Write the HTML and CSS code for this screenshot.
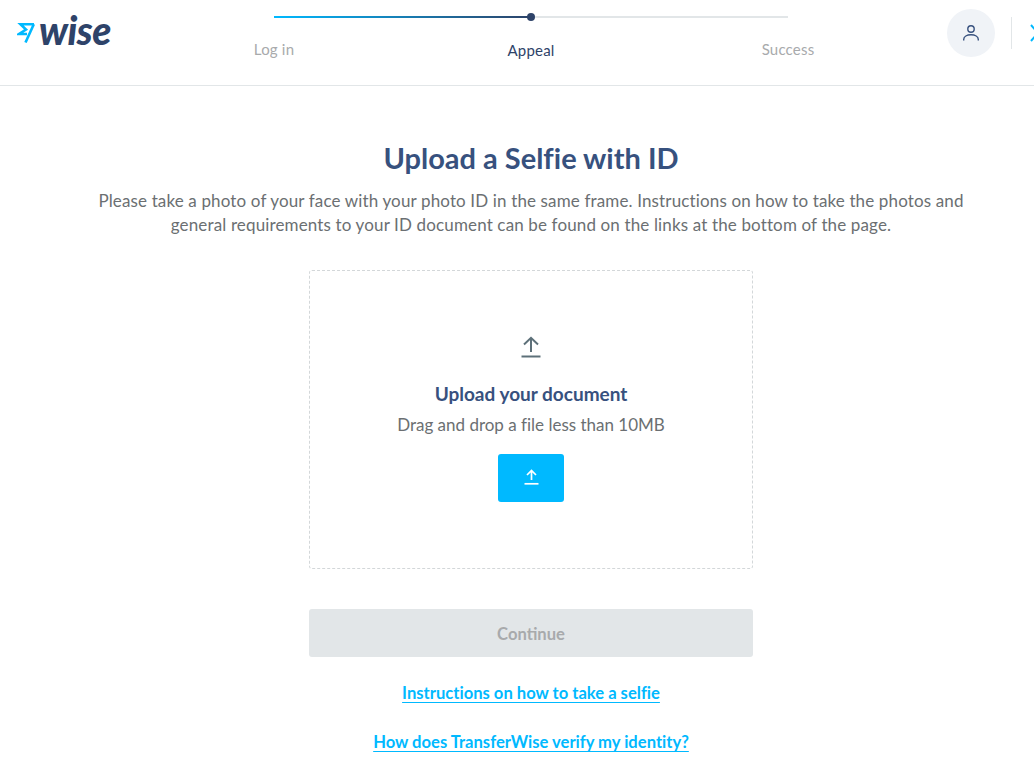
FILE: index.html
```html
<!DOCTYPE html>
<html lang="en">
<head>
  <meta charset="UTF-8">
  <meta name="viewport" content="width=device-width, initial-scale=1">
  <title>Upload a Selfie with ID</title>
  <link rel="stylesheet" href="styles.css">
</head>
<body>
  <div class="page">
    <!-- Top bar -->
    <header class="topbar">
      <a class="logo" href="#">
        <svg class="logo-flag" width="19" height="22" viewBox="0 0 19 22" fill="none" stroke="#00b9ff" stroke-width="2.6">
          <path d="M17 3.2H3.5L9 8.5L2 13H10"/>
          <path d="M16.8 3.2L8.5 21.5"/>
        </svg>
        <span class="logo-word">wise</span>
      </a>

      <div class="stepper">
        <div class="track">
          <div class="track-done"></div>
          <div class="track-dot"></div>
        </div>
        <ul class="steps">
          <li>Log in</li>
          <li class="active">Appeal</li>
          <li>Success</li>
        </ul>
      </div>

      <div class="account">
        <button class="avatar" type="button">
          <svg width="18" height="18" viewBox="0 0 18 18" fill="none" stroke="#37517e" stroke-width="1.4">
            <circle cx="9" cy="5" r="3.2"/>
            <path d="M1.7 16.5V15.6C1.7 12.6 5 10.8 9 10.8S16.3 12.6 16.3 15.6V16.5"/>
          </svg>
        </button>
        <span class="divider"></span>
        <svg class="close" width="14" height="18" viewBox="0 0 14 18" fill="none" stroke="#00b9ff" stroke-width="2">
          <path d="M1 1L8 9L1 17"/>
        </svg>
      </div>
    </header>

    <!-- Main content -->
    <main class="content">
      <h1>Upload a Selfie with ID</h1>
      <p class="intro">Please take a photo of your face with your photo ID in the same frame. Instructions on how to take the photos and general requirements to your ID document can be found on the links at the bottom of the page.</p>

      <div class="dropzone">
        <svg class="upload-icon" width="20" height="22" viewBox="0 0 20 22" fill="none" stroke="#5d7079" stroke-width="2">
          <path d="M10 16V2M3 8.5L10 1.8L17 8.5"/>
          <path d="M0.5 20.5H19.5"/>
        </svg>
        <h2>Upload your document</h2>
        <p class="hint">Drag and drop a file less than 10MB</p>
        <button class="upload-btn" type="button">
          <svg width="15" height="16" viewBox="0 0 15 16" fill="none" stroke="#fff" stroke-width="1.7">
            <path d="M7.5 11V1.5M3 6L7.5 1.5L12 6"/>
            <path d="M0.5 14.8H14.5"/>
          </svg>
        </button>
      </div>

      <button class="continue" type="button" disabled>Continue</button>
      <a class="help-link first" href="#">Instructions on how to take a selfie</a>
      <a class="help-link" href="#">How does TransferWise verify my identity?</a>
    </main>
  </div>
</body>
</html>
```

FILE: styles.css
```css
* {
  margin: 0;
  padding: 0;
  box-sizing: border-box;
}
html, body {
  height: 100%;
  overflow: hidden;
}
body {
  font-family: Lato, 'Noto Sans', sans-serif;
  font-variant-ligatures: none;
  background: #fff;
  color: #5d7079;
}

/* The page is a little wider than the window, the right edge is cut off */
.page {
  width: 1062px;
}

/* Top bar */
.topbar {
  display: flex;
  height: 86px;
  border-bottom: 1px solid #e2e6e8;
}
.logo {
  display: flex;
  align-items: flex-start;
  width: 214px;
  padding: 19px 0 0 17px;
  text-decoration: none;
}
.logo-flag {
  margin-top: 2px;
}
.logo-word {
  margin: -12px 0 0 3px;
  font-size: 39px;
  line-height: 46px;
  font-weight: 900;
  font-style: italic;
  letter-spacing: -0.5px;
  color: #2e4369;
}

/* Steps */
.stepper {
  width: 634px;
  padding-top: 16px;
}
.track {
  position: relative;
  height: 2px;
  margin: 0 60px;
  background: #e2e6e8;
}
.track-done {
  width: 50%;
  height: 100%;
  background: linear-gradient(90deg, #00b9ff, #2e4369);
}
.track-dot {
  position: absolute;
  left: 50%;
  top: -3px;
  width: 8px;
  height: 8px;
  margin-left: -4px;
  border-radius: 50%;
  background: #2e4369;
}
.steps {
  display: flex;
  justify-content: space-between;
  margin-top: 22px;
  list-style: none;
}
.steps li {
  width: 120px;
  text-align: center;
  font-size: 15px;
  line-height: 18px;
  letter-spacing: 0.2px;
  color: #a8aaac;
}
.steps li.active {
  color: #2e4369;
  margin-top: 1px;
}

/* Account */
.account {
  display: flex;
  align-items: flex-start;
  margin-left: 99px;
  padding-top: 9px;
}
.avatar {
  display: flex;
  align-items: center;
  justify-content: center;
  width: 48px;
  height: 48px;
  border: none;
  border-radius: 50%;
  background: #f0f3f7;
}
.divider {
  width: 1px;
  height: 32px;
  margin: 8px 18px 0 16px;
  background: #e2e6e8;
}
.close {
  margin-top: 15px;
}

/* Main */
.content {
  display: flex;
  flex-direction: column;
  align-items: center;
  padding-top: 55px;
}
h1 {
  font-size: 29px;
  line-height: 34px;
  font-weight: 700;
  color: #37517e;
}
.intro {
  width: 880px;
  margin-top: 14px;
  text-align: center;
  font-size: 17px;
  line-height: 24px;
  letter-spacing: 0.14px;
  color: #6b6f72;
}
.dropzone {
  display: flex;
  flex-direction: column;
  align-items: center;
  width: 444px;
  height: 299px;
  margin-top: 33px;
  padding-top: 65px;
  border: 1px dashed #d3d7d9;
  border-radius: 3px;
}
.dropzone h2 {
  margin-top: 24px;
  font-size: 19px;
  line-height: 24px;
  font-weight: 700;
  color: #37517e;
}
.hint {
  margin-top: 7px;
  font-size: 17px;
  line-height: 24px;
  color: #6b6f72;
}
.upload-btn {
  display: flex;
  align-items: center;
  justify-content: center;
  width: 66px;
  height: 48px;
  margin-top: 17px;
  padding-bottom: 3px;
  border: none;
  border-radius: 3px;
  background: #00b9ff;
}
.continue {
  width: 444px;
  height: 48px;
  margin-top: 40px;
  padding-top: 2px;
  border: none;
  border-radius: 3px;
  background: #e2e6e8;
  font-family: inherit;
  font-size: 16.6px;
  font-weight: 700;
  color: #a8aaac;
}
.help-link {
  margin-top: 25px;
  font-size: 16.6px;
  line-height: 24px;
  font-weight: 700;
  color: #00b9ff;
  text-underline-offset: 3px;
}
.help-link.first {
  margin-top: 24px;
}
```
